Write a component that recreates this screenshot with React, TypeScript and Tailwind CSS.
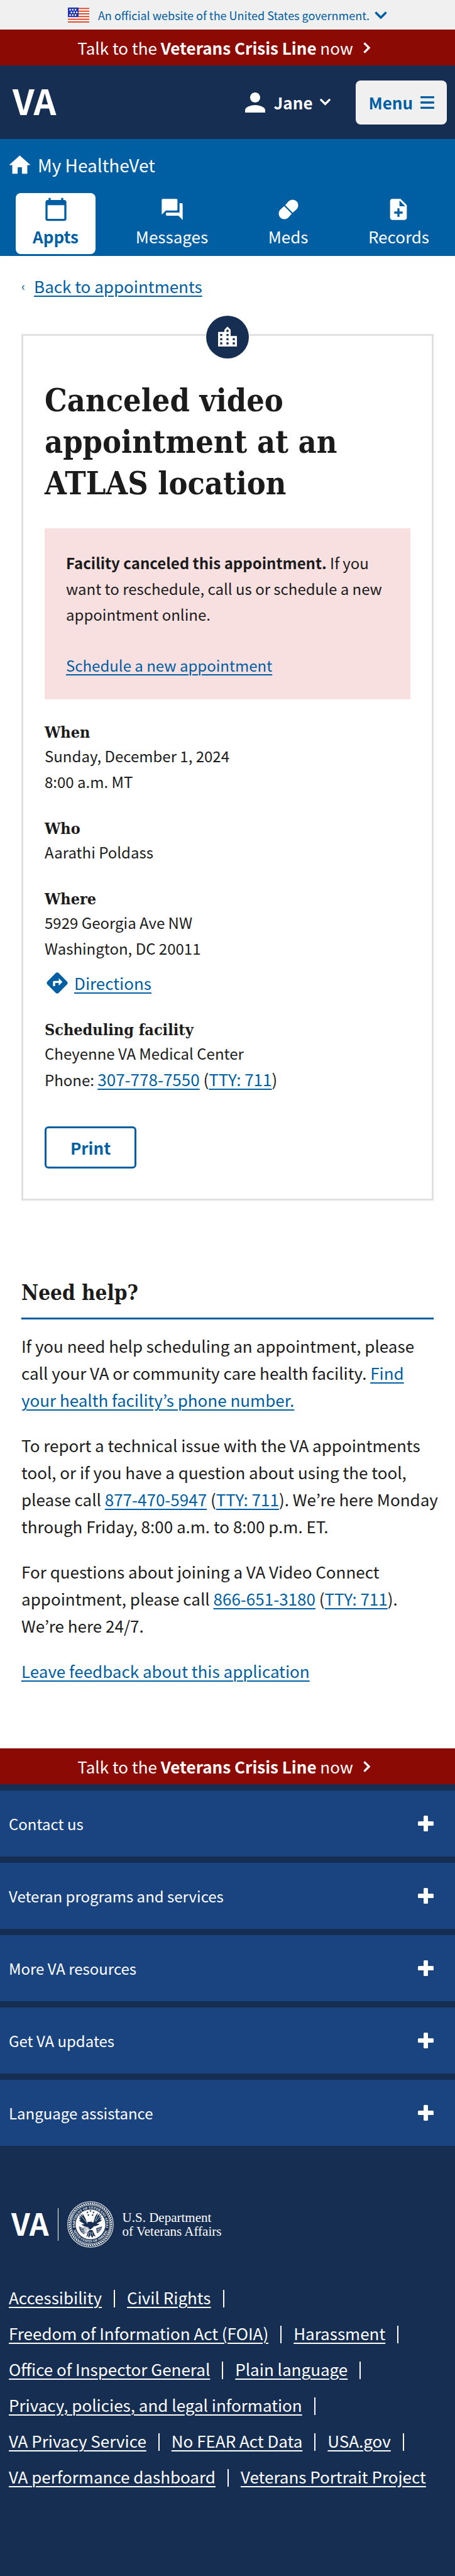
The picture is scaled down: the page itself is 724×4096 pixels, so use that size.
import type { ReactNode } from "react";
import {
  MdCalendarToday,
  MdDirections,
  MdForum,
  MdHome,
  MdLocationCity,
  MdNoteAdd,
  MdPerson,
} from "react-icons/md";

const heading = "font-['DejaVu_Serif_Condensed','DejaVu_Serif',serif] font-bold";

function TextLink({ children }: { children: ReactNode }) {
  return (
    <a href="#" className="text-[#005ea2] underline decoration-2 underline-offset-4">
      {children}
    </a>
  );
}

function Chevron({ className, direction }: { className: string; direction: "down" | "right" }) {
  return (
    <svg viewBox={direction === "down" ? "0 0 20 12" : "0 0 12 20"} className={className} fill="none" stroke="currentColor" strokeWidth="3.6" aria-hidden="true">
      <path d={direction === "down" ? "M1.5 1.5 10 10l8.5-8.5" : "M1.5 1.5 10 10l-8.5 8.5"} />
    </svg>
  );
}

function RoundChevron({ className }: { className: string }) {
  return (
    <svg viewBox="0 0 20 13" className={className} fill="none" stroke="currentColor" strokeWidth="4" strokeLinecap="round" aria-hidden="true">
      <path d="M2.2 2.2 10 10l7.8-7.8" />
    </svg>
  );
}

function UsFlag() {
  return (
    <svg viewBox="0 0 40 28" className="h-6 w-[34px]" preserveAspectRatio="none" aria-hidden="true">
      <rect width="40" height="28" fill="#fff" />
      {[0, 5, 10, 15, 20, 25].map((y) => (
        <rect key={y} y={y + 0.6} width="40" height="2.2" fill="#db3e1f" />
      ))}
      <rect width="20" height="17.6" fill="#1e33b1" />
      {[2.6, 7.6, 12.6].map((y, row) =>
        [2.8, 7.8, 12.8].map((x) => <rect key={`${x}-${y}`} x={x + (row === 1 ? 2.5 : 0)} y={y} width="2.8" height="2.8" fill="#fff" />),
      )}
    </svg>
  );
}

function PillIcon() {
  return (
    <svg viewBox="0 0 24 24" className="size-10" fill="currentColor" aria-hidden="true">
      <g transform="rotate(45 12 12)">
        <path d="M6.9 11.3 6.6 6.4a5.4 5.4 0 0 1 10.8 0l-.3 4.9z" />
        <path d="M6.9 12.7l-.3 4.9a5.4 5.4 0 0 0 10.8 0l-.3-4.9z" />
      </g>
    </svg>
  );
}

function CrisisLine() {
  return (
    <a href="#" className="flex h-[57px] items-center justify-center gap-4 bg-[#8b0a03] pr-3 text-[26px] leading-8 text-white">
      <span>
        Talk to the <b>Veterans Crisis Line</b> now
      </span>
      <Chevron direction="right" className="h-[18px] w-[11px]" />
    </a>
  );
}

const tabs = [
  { label: "Appts", icon: <MdCalendarToday className="size-10" />, active: true },
  { label: "Messages", icon: <MdForum className="size-10" />, active: false },
  { label: "Meds", icon: <PillIcon />, active: false },
  { label: "Records", icon: <MdNoteAdd className="size-10" />, active: false },
];

function Detail({ title, children }: { title: string; children: ReactNode }) {
  return (
    <section className="mb-[38px]">
      <h2 className={`${heading} text-[25px] leading-[33px]`}>{title}</h2>
      {children}
    </section>
  );
}

function Seal() {
  const ring = Array.from({ length: 60 }, (_, i) => i * 6);
  return (
    <svg viewBox="0 0 100 100" className="size-[74px] overflow-visible" role="img" aria-label="Seal">
      <circle cx="50" cy="50" r="49" fill="none" stroke="#fff" strokeWidth="1.4" />
      {ring.map((a) => (
        <path key={a} d="M48.6 3.2 51.6 7.4" stroke="#fff" strokeWidth="2.2" transform={`rotate(${a} 50 50)`} />
      ))}
      <circle cx="50" cy="50" r="41.6" fill="none" stroke="#fff" strokeWidth="1" />
      <defs>
        <path id="seal-top" d="M17.5 58A33.5 33.5 0 1 1 82.5 58" />
        <path id="seal-bottom" d="M12 60A39.5 39.5 0 0 0 88 60" />
      </defs>
      <g fill="#fff" fontSize="7.4" fontWeight="bold" fontFamily="Liberation Serif, serif" textAnchor="middle">
        <text>
          <textPath href="#seal-top" startOffset="50%">DEPARTMENT OF VETERANS AFFAIRS</textPath>
        </text>
        <text>
          <textPath href="#seal-bottom" startOffset="50%">UNITED STATES OF AMERICA</textPath>
        </text>
      </g>
      <circle cx="50" cy="50" r="32" fill="#fff" />
      <g fill="#162e51">
        {[
          [50, 21],
          [43.5, 24],
          [56.5, 24],
          [45.5, 30],
          [54.5, 30],
        ].map(([x, y]) => (
          <path key={`${x}-${y}`} transform={`translate(${x} ${y})`} d="M0-2.6.7-.8 2.5-.8 1.1.4 1.6 2.2 0 1.1-1.6 2.2-1.1.4-2.5-.8-.7-.8z" />
        ))}
        <path d="M46 52c-3-2-5-6-5-10-1-6-5-12-9-16l2 6-6-5 3 7-6-4 4 7-5-2 5 6-4 0c4 4 8 6 12 8-3 1-5 1-7 0 4 5 10 7 15 6z" />
        <path d="M51 52c4-3 6-7 7-12 1-6 4-11 8-15l-1 6 6-5-3 7 6-4-4 7 6-2-6 6 5 0c-3 4-8 6-12 8 3 1 5 1 7 0-3 4-8 6-14 6z" />
        <path d="M43 45l9-1 6 4-2 8-7 5-5-6z" />
        <path d="M25 54l13 5-1 12C30 69 26 62 25 54zM75 54l-13 4 2 11c7-3 10-9 11-15z" opacity=".8" />
        <path d="M46 62l-5 15 4-3 1 5 4-6 4 6 2-5 5 2-7-14z" />
      </g>
      <g stroke="#fff" strokeWidth="1" fill="none">
        <path d="M35 29l7 13M31 33l9 11M66 28l-6 14M70 33l-9 11M29 58l7 2M30 62l7 2M32 66l5 1M65 61l7-2M65 65l6-2M47 66l-2 8M50 66v8M53 66l2 7" />
      </g>
      <g fill="#fff" stroke="#162e51" strokeWidth=".8">
        <path d="M36 57l8 0 4 6-7 6-6-5z" />
        <path d="M37 59l7 3M36 62l6 3" />
      </g>
    </svg>
  );
}

const footerLinks = [
  "Accessibility",
  "Civil Rights",
  "Freedom of Information Act (FOIA)",
  "Harassment",
  "Office of Inspector General",
  "Plain language",
  "Privacy, policies, and legal information",
  "VA Privacy Service",
  "No FEAR Act Data",
  "USA.gov",
  "VA performance dashboard",
  "Veterans Portrait Project",
];

const footerSections = ["Contact us", "Veteran programs and services", "More VA resources", "Get VA updates", "Language assistance"];

export default function App() {
  return (
    <div className="bg-white font-['Noto_Sans_CJK_KR',sans-serif] text-[24px] leading-[41px] text-[#1b1b1b]">
      <header>
        <button type="button" className="flex h-[47px] w-full items-center justify-center bg-[#f0f0f0] text-[18px] leading-6 text-[#005ea2]">
          <UsFlag />
          <span className="ml-3.5 mr-2">An official website of the United States government.</span>
          <Chevron direction="down" className="h-3 w-5" />
        </button>
        <CrisisLine />
        <div className="flex h-[117px] items-center bg-[#162e51] pl-5 pr-[13px] text-white">
          <a href="#" aria-label="VA home" className="pb-2 text-[56px] font-bold leading-[60px]">
            VA
          </a>
          <button type="button" className="ml-auto mr-10 flex items-center text-[26px] font-bold leading-8">
            <MdPerson className="mr-1.5 size-12" />
            Jane
            <RoundChevron className="ml-3 h-[11px] w-[17px]" />
          </button>
          <button type="button" className="flex h-[70px] items-center gap-3 rounded-lg bg-[#f0f0f0] px-5 text-[26px] font-bold leading-8 text-[#005ea2]">
            Menu
            <svg viewBox="0 0 26 24" className="h-5 w-[22px]" fill="currentColor" aria-hidden="true">
              <path d="M0 0h26v4H0zM0 10h26v4H0zM0 20h26v4H0z" />
            </svg>
          </button>
        </div>
        <nav className="bg-[#005ea2] px-[25px] pb-[3px] pt-5 text-white">
          <a href="#" className="-ml-3.5 flex items-center gap-2 text-[28px] leading-[42px]">
            <MdHome className="size-[41px]" />
            My HealtheVet
          </a>
          <ul className="mt-6 flex justify-between">
            {tabs.map((tab) => (
              <li key={tab.label}>
                <a
                  href="#"
                  className={`flex h-[97px] min-w-[127px] flex-col items-center rounded-lg px-4 pt-1.5 text-[26px] leading-[45px] ${tab.active ? "bg-white font-bold text-[#005ea2]" : ""}`}
                >
                  {tab.icon}
                  {tab.label}
                </a>
              </li>
            ))}
          </ul>
        </nav>
      </header>

      <main className="px-[34px]">
        <div className="flex items-center gap-3.5 pt-[27px] text-[26px] text-[#005ea2]">
          <span aria-hidden="true" className="text-[20px]">‹</span>
          <TextLink>Back to appointments</TextLink>
        </div>

        <article className="relative mt-14 border-[3px] border-[#dfe1e2] px-[34px] pb-12 pt-[70px]">
          <span className="absolute -top-8 left-1/2 flex size-[68px] -translate-x-1/2 items-center justify-center rounded-full bg-[#162e51] text-white">
            <MdLocationCity className="size-10" />
          </span>
          <h1 className={`${heading} text-[50px] leading-[66px]`}>Canceled video appointment at an ATLAS location</h1>
          <div className="mb-9 mt-[38px] bg-[#f8dfe0] p-[34px]">
            <p>
              <b>Facility canceled this appointment.</b> If you want to reschedule, call us or schedule a new appointment online.
            </p>
            <p className="mt-10">
              <TextLink>Schedule a new appointment</TextLink>
            </p>
          </div>
          <Detail title="When">
            <p>Sunday, December 1, 2024</p>
            <p>8:00 a.m. MT</p>
          </Detail>
          <Detail title="Who">
            <p>Aarathi Poldass</p>
          </Detail>
          <Detail title="Where">
            <p>5929 Georgia Ave NW</p>
            <p>Washington, DC 20011</p>
            <p className="mt-3.5 flex items-center gap-[7px] text-[26px]">
              <MdDirections className="size-10 text-[#005ea2]" />
              <TextLink>Directions</TextLink>
            </p>
          </Detail>
          <Detail title="Scheduling facility">
            <p>Cheyenne VA Medical Center</p>
            <p>
              Phone:{" "}
              <span className="text-[26px]">
                <TextLink>307-778-7550</TextLink> (<TextLink>TTY: 711</TextLink>)
              </span>
            </p>
          </Detail>
          <button type="button" className="mt-[54px] flex h-[67px] w-[146px] items-center justify-center rounded-md border-[3px] border-[#005ea2] text-[26px] font-bold text-[#005ea2]">
            Print
          </button>
        </article>

        <section className="pb-[102px] pt-[120px]">
          <h2 className={`${heading} mb-5 border-b-[3px] border-[#005ea2] pb-3 text-[33px] leading-[54px]`}>Need help?</h2>
          <div className="flex flex-col gap-[29px] text-[26px] leading-[43px]">
            <p>
              If you need help scheduling an appointment, please call your VA or community care health facility.{" "}
              <TextLink>Find your health facility’s phone number.</TextLink>
            </p>
            <p className="-mr-4">
              To report a technical issue with the VA appointments tool, or if you have a question about using the tool, please call{" "}
              <TextLink>877-470-5947</TextLink> (<TextLink>TTY: 711</TextLink>). We’re here Monday through Friday, 8:00 a.m. to 8:00 p.m. ET.
            </p>
            <p>
              For questions about joining a VA Video Connect appointment, please call <TextLink>866-651-3180</TextLink> (
              <TextLink>TTY: 711</TextLink>). We’re here 24/7.
            </p>
            <p>
              <TextLink>Leave feedback about this application</TextLink>
            </p>
          </div>
        </section>
      </main>

      <footer className="bg-[#162e51] pb-[132px] text-white">
        <CrisisLine />
        <ul className="flex flex-col gap-2.5 pt-2.5">
          {footerSections.map((title) => (
            <li key={title}>
              <button type="button" className="flex h-[105px] w-full items-center justify-between bg-[#1a4480] pl-3.5 pr-[34px] text-left">
                {title}
                <svg viewBox="0 0 25 25" className="size-[25px]" fill="currentColor" aria-hidden="true">
                  <rect x="9" width="7" height="25" rx="1.5" />
                  <rect y="9" width="25" height="7" rx="1.5" />
                </svg>
              </button>
            </li>
          ))}
        </ul>
        <a href="#" className="ml-[18px] mt-[88px] flex items-center">
          <span className="pb-1.5 text-[48px] font-bold leading-[52px]">VA</span>
          <span className="mx-3.5 h-[52px] w-px bg-white" />
          <Seal />
          <span className="ml-3.5 font-['Liberation_Serif',serif] text-[21px] leading-[22px]">
            U.S. Department
            <br />
            of Veterans Affairs
          </span>
        </a>
        <ul className="mt-[50px] flex flex-wrap px-3.5 text-[26px] leading-[57px]">
          {footerLinks.map((link, i) => (
            <li key={link} className="flex items-center">
              <a href="#" className="underline decoration-2 underline-offset-4">
                {link}
              </a>
              {i < footerLinks.length - 1 && <span className="mx-[19px] mt-1 h-7 w-0.5 bg-white" />}
            </li>
          ))}
        </ul>
      </footer>
    </div>
  );
}
